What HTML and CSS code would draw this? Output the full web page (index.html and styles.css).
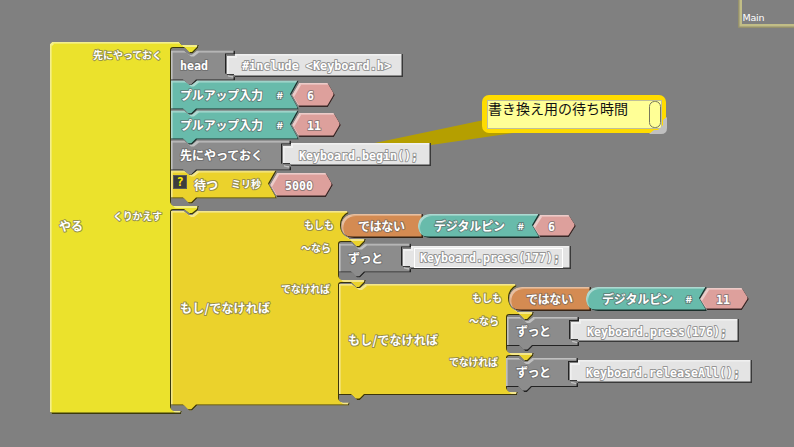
FILE: index.html
```html
<!DOCTYPE html>
<html lang="ja">
<head>
<meta charset="utf-8">
<title>Main</title>
<link rel="stylesheet" href="styles.css">
</head>
<body>
<svg class="canvas" viewBox="0 0 794 447" width="794" height="447">
  <defs>
    <filter id="bevel" x="-5%" y="-20%" width="110%" height="140%" color-interpolation-filters="sRGB">
      <feOffset in="SourceAlpha" dx="1.6" dy="1.6" result="down"/>
      <feComposite in="SourceAlpha" in2="down" operator="out" result="lit"/>
      <feGaussianBlur in="lit" stdDeviation=".6" result="litSoft"/>
      <feFlood flood-color="#fff" flood-opacity=".45"/>
      <feComposite in2="litSoft" operator="in" result="light"/>
      <feOffset in="SourceAlpha" dx="-1.5" dy="-1.5" result="up"/>
      <feComposite in="SourceAlpha" in2="up" operator="out" result="shade"/>
      <feGaussianBlur in="shade" stdDeviation=".6" result="shadeSoft"/>
      <feFlood flood-color="#000" flood-opacity=".75"/>
      <feComposite in2="shadeSoft" operator="in" result="dark"/>
      <feMerge result="all"><feMergeNode in="SourceGraphic"/><feMergeNode in="light"/><feMergeNode in="dark"/></feMerge>
      <feComposite in="all" in2="SourceAlpha" operator="in"/>
    </filter>
    <path id="forever" d="M0 0h13l5 4h3l5-4h46v4h-9v19l4 1 5 1v4h-46l-5 5h-3l-5-5h-13z"/>
    <path id="pullup" d="M0 0h13l5 4h3l5-4h102l-8 14.500 8 14.500h-102l-5 5h-3l-5-5h-13z"/>
  </defs>

  <path class="pointer" d="M370 144L484 120 520 132 431 145z"/>

  <g class="blocks">
    <path class="setup" d="M52 42H179l2 2v1h18l-1 3-5 5h-3l-5-5H174q-3 0-3 3V202q0 4 4 4h24l-1 4-5 4h-3l-5-4H174q-3 0-3 3V407q0 4 4 4h7l-1 3H52l-2-2V44z"/>
    <path class="plain" d="M171 50.500h13l5 4h3l5-4h38v4h-9v20l4 1 5 1v4h-38l-5 5h-3l-5-5h-13z"/>
    <path class="code" d="M227 56h8v-2h168v23H235v-2h-8z"/>
    <path class="plain" d="M171 140.500h13l5 4h3l5-4h94v4h-9v20l4 1 5 1v4h-94l-5 5h-3l-5-5h-13z"/>
    <use class="teal" href="#pullup" x="171" y="110.500"/>
    <use class="teal" href="#pullup" x="171" y="80.500"/>
    <path class="pink" d="M292 95l7-12h29l7 12-7 12h-29z"/>
    <path class="pink" d="M292 125l7-12h35l7 12-7 12h-35z"/>
    <path class="code" d="M283 146h8v-3h140v23H291v-2h-8z"/>
    <path class="gold" d="M171 170.500h13l5 4h3l5-4h80l-8 14 8 14h-80l-5 5h-3l-5-5h-13z"/>
    <path class="pink" d="M270 185l7-12h49l7 12-7 12h-49z"/>

    <path class="gold" d="M171 211h13l5 4h3l5-4H347l2 2q-8 4-8 13t8 12v1h17l-1 3-5 5h-3l-5-5h-10q-3 0-3 3v31q0 4 4 4h23l-1 3-5 5h-3l-5-5h-10q-3 0-3 3V399q0 3 4 3.500h7l-1 3H197l-5 5h-3l-5-5H171z"/>
    <path class="orange" d="M354 214h69v24h-69c-17 0-17-24 0-24z"/>
    <path class="teal" d="M430 214h110l-7 12 7 12H430c-16 0-16-24 0-24z"/>
    <path class="pink" d="M533 226l7-11h29l7 11-7 11h-29z"/>
    <use class="plain" href="#forever" x="339" y="243.500"/>
    <path class="code" d="M403 249h8v-3h160v23H411v-2h-8z"/>
    <rect class="selected" x="414.500" y="248.500" width="148" height="19"/>

    <path class="gold" d="M339 284h13l5 4h3l5-4H515l2 2q-8 4-8 13t8 12v1h17l-1 3-5 5h-3l-5-5h-10q-3 0-3 3v31q0 4 4 4h23l-1 3-5 5h-3l-5-5h-10q-3 0-3 3v29q0 4 4 4h7l-1 3H365l-5 5h-3l-5-5H339z"/>
    <path class="orange" d="M522 287h69v24h-69c-17 0-17-24 0-24z"/>
    <path class="teal" d="M598 287h109l-7 12 7 12H598c-16 0-16-24 0-24z"/>
    <path class="pink" d="M700 299l7-11h35l7 11-7 11h-35z"/>
    <use class="plain" href="#forever" x="507" y="317"/>
    <path class="code" d="M571 322h8v-3h160v23H579v-2h-8z"/>
    <use class="plain" href="#forever" x="506" y="358"/>
    <path class="code" d="M570 363h8v-3h174v23H578v-2h-8z"/>
  </g>

  <g class="label">
    <text x="59" y="231" textLength="24">やる</text>
    <text x="180" y="100" textLength="83">プルアップ入力</text>
    <text x="180" y="130" textLength="83">プルアップ入力</text>
    <text x="180" y="160" textLength="83">先にやっておく</text>
    <text x="194" y="190" textLength="24">待つ</text>
    <text x="180" y="313" textLength="90">もし/でなければ</text>
    <text x="348" y="345" textLength="90">もし/でなければ</text>
    <text x="358" y="231" textLength="47">ではない</text>
    <text x="434" y="231" textLength="71">デジタルピン</text>
    <text x="526" y="304" textLength="47">ではない</text>
    <text x="602" y="304" textLength="71">デジタルピン</text>
    <text x="348" y="263" textLength="35">ずっと</text>
    <text x="516" y="336" textLength="35">ずっと</text>
    <text x="516" y="377" textLength="35">ずっと</text>
  </g>
  <g class="label small">
    <text x="93" y="59" textLength="69">先にやっておく</text>
    <text x="113" y="220" textLength="49">くりかえす</text>
    <text x="231" y="188" textLength="30">ミリ秒</text>
    <text x="304" y="229" textLength="30">もしも</text>
    <text x="301" y="252" textLength="30">〜なら</text>
    <text x="281" y="293" textLength="49">でなければ</text>
    <text x="472" y="302" textLength="30">もしも</text>
    <text x="469" y="325" textLength="30">〜なら</text>
    <text x="449" y="366" textLength="49">でなければ</text>
    <text x="276.500" y="98.500" textLength="6.500" lengthAdjust="spacingAndGlyphs">#</text>
    <text x="276.500" y="128.500" textLength="6.500" lengthAdjust="spacingAndGlyphs">#</text>
    <text x="517.500" y="229.500" textLength="6.500" lengthAdjust="spacingAndGlyphs">#</text>
    <text x="685.500" y="302.500" textLength="6.500" lengthAdjust="spacingAndGlyphs">#</text>
  </g>
  <g class="label mono">
    <text x="180" y="70" textLength="28" lengthAdjust="spacingAndGlyphs">head</text>
    <text x="242" y="70" textLength="149" lengthAdjust="spacingAndGlyphs">#include &lt;Keyboard.h&gt;</text>
    <text x="299" y="160" textLength="119" lengthAdjust="spacingAndGlyphs">Keyboard.begin();</text>
    <text x="420" y="262" textLength="140" lengthAdjust="spacingAndGlyphs">Keyboard.press(177);</text>
    <text x="587" y="336" textLength="140" lengthAdjust="spacingAndGlyphs">Keyboard.press(176);</text>
    <text x="586" y="377" textLength="154" lengthAdjust="spacingAndGlyphs">Keyboard.releaseAll();</text>
    <text x="307" y="100" textLength="7" lengthAdjust="spacingAndGlyphs">6</text>
    <text x="307" y="130" textLength="14" lengthAdjust="spacingAndGlyphs">11</text>
    <text x="285" y="190" textLength="28" lengthAdjust="spacingAndGlyphs">5000</text>
    <text x="548" y="231" textLength="7" lengthAdjust="spacingAndGlyphs">6</text>
    <text x="716" y="304" textLength="14" lengthAdjust="spacingAndGlyphs">11</text>
  </g>

  <g class="help">
    <rect x="173.500" y="175.500" width="13" height="13"/>
    <text x="176.500" y="186">?</text>
  </g>

  <g class="note">
    <rect class="note-frame" x="482" y="95" width="184" height="38" rx="7"/>
    <rect class="note-body" x="487.500" y="100.500" width="174" height="28"/>
    <rect class="note-scroll" x="649.500" y="101.500" width="11" height="26" rx="5"/>
    <path class="note-grip" d="M667 117v11q0 6-6 6H649l5-4h4l5-5v-5z"/>
    <text class="note-text" x="488" y="114" textLength="140">書き換え用の待ち時間</text>
  </g>

  <g class="page-tab">
    <path class="edge-outer" d="M738.500 0V27.500H794"/>
    <path class="edge-mid" d="M739.500 0V26.500H794"/>
    <path class="edge-inner" d="M741 0V25H794"/>
    <text x="742.500" y="21" textLength="22">Main</text>
  </g>
</svg>
</body>
</html>
```

FILE: styles.css
```css
body {
  margin: 0;
  background: #808080;
  overflow: hidden;
}

.canvas {
  display: block;
  background: #808080;
  font-family: "Noto Sans CJK JP", sans-serif;
}

.blocks > * { filter: url(#bevel); }
.blocks > .selected { filter: none; }
.setup { fill: #ebe22c; }
.gold { fill: #ebd22c; }
.plain { fill: #8c8c8c; }
.teal { fill: #68bbab; }
.orange { fill: #d48b52; }
.pink { fill: #dda09c; }
.code { fill: #e4e4e4; }
.selected { fill: none; stroke: #fff; }

.label text {
  fill: #fff;
  stroke: rgba(95, 95, 95, 0.6);
  stroke-width: 2px;
  stroke-linejoin: round;
  paint-order: stroke;
  font-size: 12px;
  font-weight: 700;
}
.label.small text { font-size: 10px; }
.label.mono text {
  font-family: "DejaVu Sans Mono", monospace;
  font-size: 12.6px;
}

.pointer { fill: #b59f00; }
.help rect { fill: #3c3c3c; stroke: #5a5a5a; }
.help text {
  fill: #ffee00;
  font: 700 12px "DejaVu Sans Mono", monospace;
}

.note-frame { fill: #ffdc00; }
.note-body { fill: #ffff96; stroke: #c0c09a; }
.note-scroll { fill: #ffff96; stroke: #77775c; }
.note-grip { fill: #c0c0c0; }
.note-text { fill: #111; font-size: 14px; }

.page-tab path { fill: none; stroke-width: 1px; }
.edge-outer { stroke: #96916c; }
.edge-mid { stroke: #aaa67c; }
.page-tab .edge-inner { stroke: #c1bd86; stroke-width: 2px; }
.page-tab text { fill: #fff; font: 9.5px "DejaVu Sans", sans-serif; }
```
